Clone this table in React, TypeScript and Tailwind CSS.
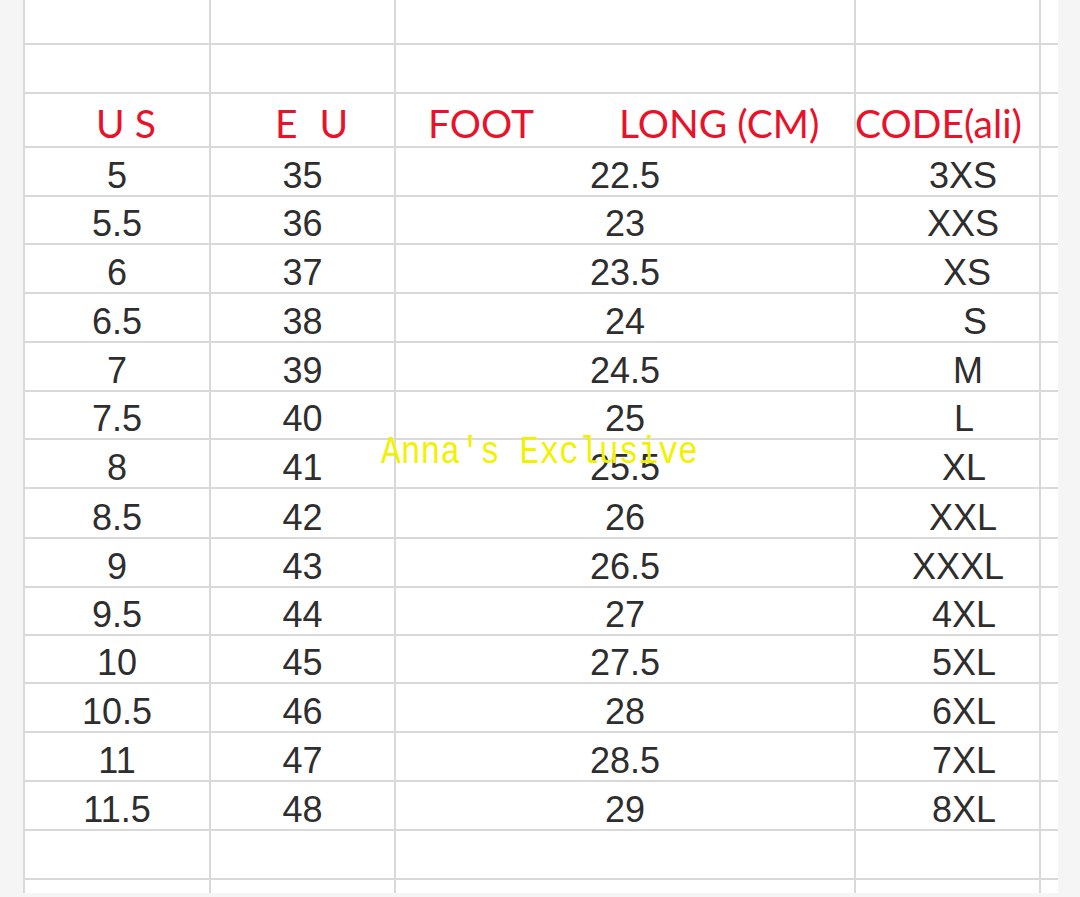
import React from 'react';

// US / EU / foot length / size code
const sizes = [
  { us: '5', eu: '35', cm: '22.5', code: '3XS', h: 'h-[49px]', pad: 'pl-[31px]' },
  { us: '5.5', eu: '36', cm: '23', code: 'XXS', h: 'h-[48px]', pad: 'pl-[31px]' },
  { us: '6', eu: '37', cm: '23.5', code: 'XS', h: 'h-[49px]', pad: 'pl-[39px]' },
  { us: '6.5', eu: '38', cm: '24', code: 'S', h: 'h-[49px]', pad: 'pl-[55px]' },
  { us: '7', eu: '39', cm: '24.5', code: 'M', h: 'h-[49px]', pad: 'pl-[41px]' },
  { us: '7.5', eu: '40', cm: '25', code: 'L', h: 'h-[48px]', pad: 'pl-[33px]' },
  { us: '8', eu: '41', cm: '25.5', code: 'XL', h: 'h-[49px]', pad: 'pl-[33px]' },
  { us: '8.5', eu: '42', cm: '26', code: 'XXL', h: 'h-[50px]', pad: 'pl-[31px]' },
  { us: '9', eu: '43', cm: '26.5', code: 'XXXL', h: 'h-[49px]', pad: 'pl-[21px]' },
  { us: '9.5', eu: '44', cm: '27', code: '4XL', h: 'h-[48px]', pad: 'pl-[33px]' },
  { us: '10', eu: '45', cm: '27.5', code: '5XL', h: 'h-[48px]', pad: 'pl-[33px]' },
  { us: '10.5', eu: '46', cm: '28', code: '6XL', h: 'h-[49px]', pad: 'pl-[33px]' },
  { us: '11', eu: '47', cm: '28.5', code: '7XL', h: 'h-[49px]', pad: 'pl-[33px]' },
  { us: '11.5', eu: '48', cm: '29', code: '8XL', h: 'h-[49px]', pad: 'pl-[33px]' },
];

const cols = 'grid grid-cols-[186px_185px_460px_185px_17px]';
const cell = 'border-r-2 border-[#d9d9d9]';
const dataCell = `${cell} flex items-end justify-center pb-[1px] leading-none`;

const EmptyRow: React.FC<{ h: string; last?: boolean }> = ({ h, last }) => (
  <div className={`${cols} ${h} ${last ? '' : 'border-b-2 border-[#d9d9d9]'}`}>
    <div className={cell} />
    <div className={cell} />
    <div className={cell} />
    <div className={cell} />
    <div />
  </div>
);

export default function App() {
  return (
    <div className="relative w-[1080px] h-[897px] bg-[#f5f5f5] overflow-hidden">
      <div className="ml-[23px] w-[1035px] bg-white border-l-2 border-[#d9d9d9] font-['Liberation_Sans',Arial,sans-serif] text-[36px] text-[#2e2e2e]">
        <EmptyRow h="h-[45px]" />
        <EmptyRow h="h-[49px]" />

        {/* header */}
        <div className={`${cols} h-[54px] border-b-2 border-[#d9d9d9] font-['Lato',sans-serif] text-[39px] text-[#e8132b] leading-none`}>
          <div className={`${cell} flex items-end pb-[3px] pl-[71px] whitespace-pre`}>U S</div>
          <div className={`${cell} flex items-end pb-[3px] pl-[64px] whitespace-pre`}>
            <span>E</span>
            <span className="ml-[22px]">U</span>
          </div>
          <div className={`${cell} flex items-end pb-[3px] pl-[32px] whitespace-pre`}>
            <span>FOOT</span>
            <span className="ml-[85px]">LONG (CM)</span>
          </div>
          <div className={`${cell} relative`}>
            <span className="absolute left-[-1px] bottom-[3px] whitespace-nowrap">CODE(ali)</span>
          </div>
          <div />
        </div>

        {sizes.map((s) => (
          <div key={s.us} className={`${cols} ${s.h} border-b-2 border-[#d9d9d9]`}>
            <div className={dataCell}>{s.us}</div>
            <div className={dataCell}>{s.eu}</div>
            <div className={dataCell}>{s.cm}</div>
            <div className={`${dataCell} ${s.pad}`}>{s.code}</div>
            <div />
          </div>
        ))}

        <EmptyRow h="h-[49px]" />
        <EmptyRow h="h-[13px]" last />
      </div>

      {/* watermark */}
      <div className="absolute left-[381px] top-[439px] origin-bottom scale-y-[1.15] font-['Liberation_Mono',monospace] text-[33px] leading-none text-[#f2f200] whitespace-pre">
        Anna's Exclusive
      </div>
    </div>
  );
}
